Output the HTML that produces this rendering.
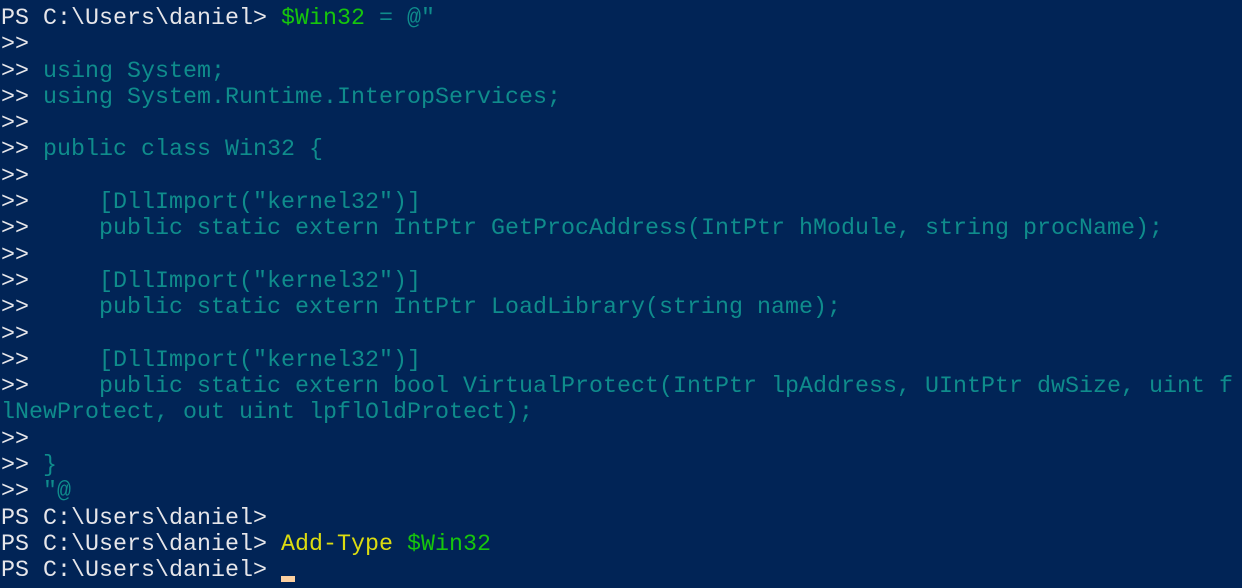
<!DOCTYPE html>
<html><head><style>
html,body{margin:0;padding:0;background:#012456;width:1242px;height:588px;overflow:hidden}
pre{margin:0;position:absolute;left:1px;top:5px;font-family:"Liberation Mono",monospace;font-size:23.3px;line-height:26.3px;color:#e6e6ea;letter-spacing:0.02px}
.t{color:#0f8c8c}.g{color:#16c60c}.y{color:#dcdc10}
.c{display:inline-block;width:14px;height:6px;background:#fcd0a0;vertical-align:-6px}
</style></head><body><pre>PS C:\Users\daniel&gt; <span class="g">$Win32</span> <span class="t">= @"</span>
&gt;&gt;
&gt;&gt; <span class="t">using System;</span>
&gt;&gt; <span class="t">using System.Runtime.InteropServices;</span>
&gt;&gt;
&gt;&gt; <span class="t">public class Win32 {</span>
&gt;&gt;
&gt;&gt; <span class="t">    [DllImport("kernel32")]</span>
&gt;&gt; <span class="t">    public static extern IntPtr GetProcAddress(IntPtr hModule, string procName);</span>
&gt;&gt;
&gt;&gt; <span class="t">    [DllImport("kernel32")]</span>
&gt;&gt; <span class="t">    public static extern IntPtr LoadLibrary(string name);</span>
&gt;&gt;
&gt;&gt; <span class="t">    [DllImport("kernel32")]</span>
&gt;&gt; <span class="t">    public static extern bool VirtualProtect(IntPtr lpAddress, UIntPtr dwSize, uint f</span>
<span class="t">lNewProtect, out uint lpflOldProtect);</span>
&gt;&gt;
&gt;&gt; <span class="t">}</span>
&gt;&gt; <span class="t">"@</span>
PS C:\Users\daniel&gt;
PS C:\Users\daniel&gt; <span class="y">Add-Type</span> <span class="g">$Win32</span>
PS C:\Users\daniel&gt; <span class="c"></span></pre></body></html>
